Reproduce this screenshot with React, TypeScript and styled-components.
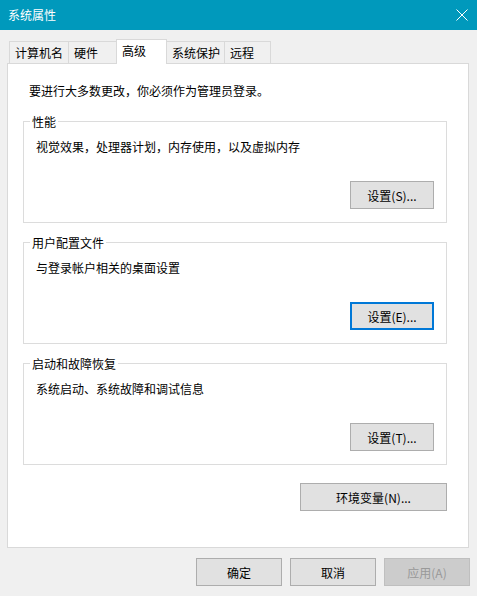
import styled, { createGlobalStyle } from 'styled-components'

const GlobalStyle = createGlobalStyle`
  html, body {
    margin: 0;
    padding: 0;
    background: #f0f0f0;
  }
  body {
    font-family: 'Noto Sans CJK SC', 'Microsoft YaHei UI', sans-serif;
    font-size: 12px;
    color: #000;
  }
`

const tabs = [
  { label: '计算机名', width: 60 },
  { label: '硬件', width: 49 },
  { label: '高级', width: 51, active: true },
  { label: '系统保护', width: 59 },
  { label: '远程', width: 47 },
]

const groups = [
  { title: '性能', text: '视觉效果，处理器计划，内存使用，以及虚拟内存', button: '设置(S)...' },
  { title: '用户配置文件', text: '与登录帐户相关的桌面设置', button: '设置(E)...', focused: true },
  { title: '启动和故障恢复', text: '系统启动、系统故障和调试信息', button: '设置(T)...' },
]

export default function App() {
  return (
    <>
      <GlobalStyle />
      <Window>
        <TitleBar>
          <Title>系统属性</Title>
          <CloseIcon width="12" height="12" viewBox="0 0 12 12">
            <path d="M0.5 0.5 L11.5 11.5 M11.5 0.5 L0.5 11.5" stroke="#fff" strokeWidth="1" fill="none" />
          </CloseIcon>
        </TitleBar>

        <TabStrip>
          {tabs.map((t) => (
            <Tab key={t.label} $w={t.width} $active={t.active}>
              {t.label}
            </Tab>
          ))}
        </TabStrip>

        <Panel>
          <Intro>要进行大多数更改，你必须作为管理员登录。</Intro>
          {groups.map((g) => (
            <Group key={g.title}>
              <Legend>{g.title}</Legend>
              <Description>{g.text}</Description>
              <GroupButton $w={84} $focused={g.focused}>
                {g.button}
              </GroupButton>
            </Group>
          ))}
          <EnvRow>
            <Button $w={147}>环境变量(N)...</Button>
          </EnvRow>
        </Panel>

        <Footer>
          <Button $w={86}>确定</Button>
          <Button $w={86}>取消</Button>
          <Button $w={86} disabled>
            应用(A)
          </Button>
        </Footer>
      </Window>
    </>
  )
}

const Window = styled.div`
  width: 477px;
  height: 596px;
  display: flex;
  flex-direction: column;
  background: #f0f0f0;
  overflow: hidden;
`

const TitleBar = styled.div`
  box-sizing: border-box;
  height: 30px;
  flex: none;
  display: flex;
  align-items: center;
  justify-content: space-between;
  padding: 0 9px 0 8px;
  background: #0099bc;
  color: #fff;
`

const Title = styled.span`
  line-height: 17px;
  margin-top: -1px;
`

const CloseIcon = styled.svg`
  display: block;
  margin-top: -1px;
`

const TabStrip = styled.div`
  display: flex;
  align-items: flex-end;
  height: 24px;
  margin: 9px 0 0 9px;
  position: relative;
  z-index: 1;
`

const Tab = styled.div<{ $w: number; $active?: boolean }>`
  box-sizing: border-box;
  width: ${(p) => p.$w}px;
  height: ${(p) => (p.$active ? 25 : 22)}px;
  margin-bottom: ${(p) => (p.$active ? -1 : 0)}px;
  padding: 2px 0 0 5px;
  border: 1px solid #d9d9d9;
  border-bottom: none;
  background: ${(p) => (p.$active ? '#fff' : '#f0f0f0')};
  line-height: 17px;
  white-space: nowrap;
  position: relative;
  z-index: ${(p) => (p.$active ? 2 : 1)};

  & + & {
    margin-left: -1px;
  }
`

const Panel = styled.div`
  box-sizing: border-box;
  height: 485px;
  margin: 0 8px 0 7px;
  padding: 18px 21px 0 15px;
  border: 1px solid #d9d9d9;
  background: #fff;
  display: flex;
  flex-direction: column;
`

const Intro = styled.div`
  line-height: 17px;
  padding-left: 6px;
  margin-bottom: 22px;
`

const Group = styled.section`
  box-sizing: border-box;
  height: 102px;
  flex: none;
  display: flex;
  flex-direction: column;
  padding: 0 12px 13px 12px;
  border: 1px solid #dcdcdc;

  & + & {
    margin-top: 19px;
  }
`

const Legend = styled.div`
  align-self: flex-start;
  margin: -9px 0 0 -6px;
  padding: 0 2px;
  background: #fff;
  line-height: 17px;
`

const Description = styled.div`
  margin-top: 8px;
  line-height: 17px;
`

const Button = styled.button<{ $w: number; $focused?: boolean }>`
  box-sizing: border-box;
  width: ${(p) => p.$w}px;
  height: 28px;
  padding: 0;
  border: ${(p) => (p.$focused ? '2px solid #0078d7' : '1px solid #adadad')};
  background: #e1e1e1;
  font: inherit;
  line-height: 17px;
  color: #000;

  &:disabled {
    background: #cccccc;
    border-color: #bfbfbf;
    color: #999999;
  }
`

const GroupButton = styled(Button)`
  margin-top: auto;
  align-self: flex-end;
`

const EnvRow = styled.div`
  display: flex;
  justify-content: flex-end;
  margin-top: 18px;
`

const Footer = styled.div`
  display: flex;
  justify-content: flex-end;
  gap: 8px;
  margin-top: 10px;
  padding-right: 7px;
`
